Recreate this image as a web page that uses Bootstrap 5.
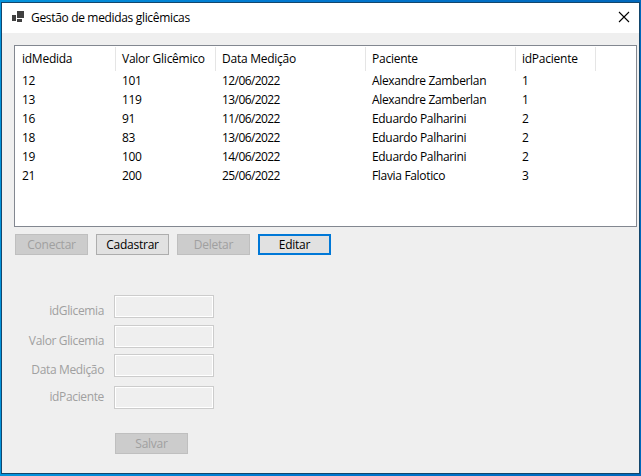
<!DOCTYPE html>
<html lang="pt-BR">
<head>
<meta charset="utf-8">
<title>Gestão de medidas glicêmicas</title>
<link href="https://cdn.jsdelivr.net/npm/bootstrap@5.3.0/dist/css/bootstrap.min.css" rel="stylesheet">
<style>
body{width:641px;height:476px;padding:2px 1px;background:linear-gradient(90deg,#0494dc,#0078d0 45%,#0068bc);font:12px/19px "Open Sans","Noto Sans",sans-serif;color:#000;letter-spacing:-.25px}
.win{width:639px;height:472px;border:1px solid #13466c;background:#efefef}
.titlebar{height:30px;padding:0 9px 2px 10px}
.caption-text{margin-left:7px;letter-spacing:-.33px}
.listview{width:623px;height:182px;margin:12px 0 0 12px;border:1px solid #828790;padding-top:1px}
.grid-row{display:grid;grid-template-columns:100px 100px 150px 150px 80px;height:19px;line-height:19px;margin-left:1px}
.grid-row>div{padding-left:6px;white-space:nowrap}
.rows .grid-row>div{letter-spacing:-.33px}
.rows .grid-row>div:nth-child(3){letter-spacing:-.58px}
.grid-head{height:24px;line-height:23px}
.grid-head>div{border-right:1px solid #e5e5e5}
.win .btn{width:73px;height:21px;padding:0;border:1px solid #adadad;border-radius:0;background:#e1e1e1;color:#000;font-size:12px;line-height:19px;letter-spacing:inherit}
.win .btn:disabled{background:#ccc;border-color:#bfbfbf;color:#a0a0a0;opacity:1}
.win .btn.current{border:2px solid #0078d7;line-height:17px}
.toolbar{margin:7px 0 0 13px}
.fields{margin:40px 0 0 12px;color:#a0a0a0}
.field{height:23px}
.field label{width:90px;text-align:right;line-height:23px;padding-top:4px;letter-spacing:-.36px}
.field label.mid{padding-top:0;line-height:21px}
.gap-a{margin-top:7px}
.gap-b{margin-top:6px}
.gap-c{margin-top:9px}
.field .form-control{width:100px;height:23px;min-height:0;margin-left:10px;padding:0;border:1px solid #ccc;border-radius:0;background:#efefef;box-shadow:inset 0 0 0 1px #fff}
.save{margin:24px 0 0 113px}
</style>
<script src="https://cdn.jsdelivr.net/npm/bootstrap@5.3.0/dist/js/bootstrap.bundle.min.js"></script>
</head>
<body class="overflow-hidden">
<main class="win">
  <header class="titlebar bg-white d-flex align-items-center">
    <svg class="mb-auto mt-2" width="12" height="11" viewBox="0 0 12 11" fill="#404040" shape-rendering="crispEdges"><path d="M5 0h7v7H5zM0 4h4v6H0zM5 8h5v3H5z"/></svg>
    <span class="caption-text">Gestão de medidas glicêmicas</span>
    <svg class="ms-auto" width="12" height="12" viewBox="0 0 12 12" stroke="#000" stroke-width="1.1"><path d="M1 1l10 10M11 1L1 11"/></svg>
  </header>
  <section class="listview bg-white">
    <div class="grid-row grid-head"><div>idMedida</div><div>Valor Glicêmico</div><div>Data Medição</div><div>Paciente</div><div>idPaciente</div></div>
    <div class="rows">
      <div class="grid-row"><div>12</div><div>101</div><div>12/06/2022</div><div>Alexandre Zamberlan</div><div>1</div></div>
      <div class="grid-row"><div>13</div><div>119</div><div>13/06/2022</div><div>Alexandre Zamberlan</div><div>1</div></div>
      <div class="grid-row"><div>16</div><div>91</div><div>11/06/2022</div><div>Eduardo Palharini</div><div>2</div></div>
      <div class="grid-row"><div>18</div><div>83</div><div>13/06/2022</div><div>Eduardo Palharini</div><div>2</div></div>
      <div class="grid-row"><div>19</div><div>100</div><div>14/06/2022</div><div>Eduardo Palharini</div><div>2</div></div>
      <div class="grid-row"><div>21</div><div>200</div><div>25/06/2022</div><div>Flavia Falotico</div><div>3</div></div>
    </div>
  </section>
  <div class="toolbar d-flex gap-2">
    <button class="btn" disabled>Conectar</button>
    <button class="btn">Cadastrar</button>
    <button class="btn" disabled>Deletar</button>
    <button class="btn current">Editar</button>
  </div>
  <form class="fields">
    <div class="field d-flex"><label for="g">idGlicemia</label><input id="g" class="form-control" disabled></div>
    <div class="field d-flex gap-a"><label for="v">Valor Glicemia</label><input id="v" class="form-control" disabled></div>
    <div class="field d-flex gap-b"><label for="d">Data Medição</label><input id="d" class="form-control" disabled></div>
    <div class="field d-flex gap-c"><label class="mid" for="p">idPaciente</label><input id="p" class="form-control" disabled></div>
  </form>
  <div class="save d-flex"><button class="btn" disabled>Salvar</button></div>
</main>
</body>
</html>
